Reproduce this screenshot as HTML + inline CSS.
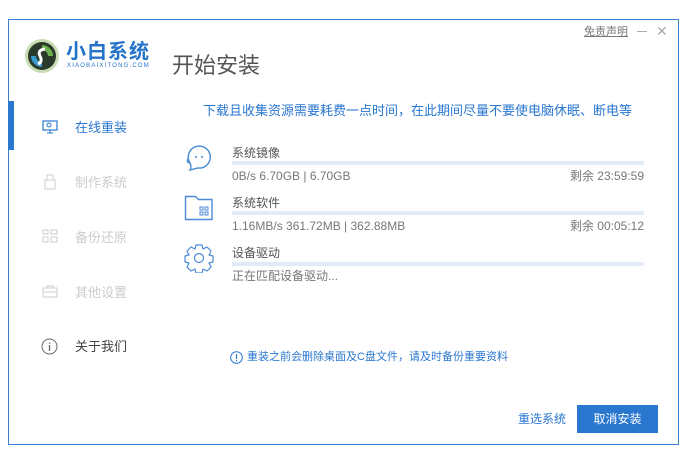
<!DOCTYPE html>
<html><head><meta charset="utf-8"><style>
*{margin:0;padding:0;box-sizing:border-box}
body{width:689px;height:455px;background:#fff;position:relative;overflow:hidden;font-family:"Liberation Sans","Noto Sans CJK SC",sans-serif;}
.win{position:absolute;left:8px;top:19px;width:671px;height:426px;border:1px solid #3a80cf;background:#fff}
.a{position:absolute;white-space:nowrap;line-height:19px}
.bar{position:absolute;left:232px;width:412px;height:4px;background:#e2ebf7}
.t{font-size:12px;color:#555}
.n{font-size:12px;color:#777}
.nav{font-size:13px;color:#ccc}
</style></head><body>
<div class="win"></div>
<div class="a" style="left:8px;top:101px;width:6px;height:49px;background:#2a77d0"></div>
<svg class="a" style="left:23px;top:37px" width="38" height="38" viewBox="0 0 38 38">
<circle cx="19" cy="19" r="17" fill="#c9dcb4"/>
<circle cx="19" cy="19" r="14" fill="#2a3a2a"/>
<path d="M19 8 A11 11 0 0 1 30 19 L25 19 A6 6 0 0 0 19 13Z" fill="#6ab04c"/>
<path d="M19 30 A11 11 0 0 1 8 19 L13 19 A6 6 0 0 0 19 25Z" fill="#3a9ad0"/>
<path d="M22 12 Q14 13 17 19 Q20 25 15 27" stroke="#fff" stroke-width="3" fill="none"/>
</svg>
<div class="a" style="left:66px;top:40px;font-size:20px;line-height:24px;color:#2473c9;font-weight:bold;letter-spacing:1px">小白系统</div>
<div class="a" style="left:67px;top:62px;font-size:6px;line-height:8px;color:#2473c9;letter-spacing:1.2px">XIAOBAIXITONG.COM</div>
<div class="a" style="left:172px;top:52px;font-size:22px;line-height:28px;color:#555">开始安装</div>
<div class="a" style="left:584px;top:23px;font-size:11px;color:#777;text-decoration:underline">免责声明</div>
<div class="a" style="left:637px;top:31px;width:10px;height:1px;background:#aaa"></div>
<div class="a" style="left:656px;top:22px;font-size:14px;color:#aaa">✕</div>
<svg class="a" style="left:42px;top:120px" width="16" height="14" viewBox="0 0 16 14"><rect x="1" y="1" width="14" height="9" fill="none" stroke="#2a77d0" stroke-width="1.2"/><circle cx="7" cy="5" r="2" fill="none" stroke="#2a77d0"/><path d="M5 13h6M8 10v3" stroke="#2a77d0"/></svg>
<div class="a" style="left:75px;top:118px;font-size:13px;color:#2a77d0">在线重装</div>
<svg class="a" style="left:44px;top:174px" width="12" height="16"><rect x="1" y="6" width="10" height="9" fill="none" stroke="#ccc"/><rect x="3" y="1" width="6" height="5" fill="none" stroke="#ccc"/></svg>
<div class="a nav" style="left:75px;top:173px">制作系统</div>
<svg class="a" style="left:42px;top:229px" width="16" height="14"><rect x="1" y="1" width="5" height="4" fill="none" stroke="#ccc"/><rect x="1" y="8" width="5" height="5" fill="none" stroke="#ccc"/><rect x="9" y="1" width="6" height="4" fill="none" stroke="#ccc"/><rect x="9" y="8" width="6" height="5" fill="none" stroke="#ccc"/></svg>
<div class="a nav" style="left:75px;top:228px">备份还原</div>
<svg class="a" style="left:42px;top:285px" width="16" height="13"><rect x="1" y="3" width="14" height="9" fill="none" stroke="#ccc"/><path d="M5 3V1h6v2M1 7h14" stroke="#ccc" fill="none"/></svg>
<div class="a nav" style="left:75px;top:283px">其他设置</div>
<svg class="a" style="left:41px;top:338px" width="17" height="17"><circle cx="8.5" cy="8.5" r="7.5" fill="none" stroke="#666"/><path d="M8.5 7v6M8.5 4.5v1.2" stroke="#666" stroke-width="1.3"/></svg>
<div class="a" style="left:75px;top:337px;font-size:13px;color:#444">关于我们</div>
<div class="a" style="left:203px;top:101px;font-size:13px;color:#2a77d0">下载且收集资源需要耗费一点时间，在此期间尽量不要使电脑休眠、断电等</div>
<svg class="a" style="left:184px;top:143px" width="30" height="30" viewBox="0 0 30 30"><path d="M6 20 A11 11 0 1 1 14 25 L6 27 Q8 24 6 20 Q2 19 4 16" fill="none" stroke="#4a8ad6" stroke-width="1.4"/><circle cx="12" cy="14" r="1" fill="#4a8ad6"/><circle cx="18" cy="14" r="1" fill="#4a8ad6"/></svg>
<div class="a t" style="left:232px;top:144px">系统镜像</div>
<div class="bar" style="top:161px"></div>
<div class="a n" style="left:232px;top:167px">0B/s 6.70GB | 6.70GB</div>
<div class="a n" style="right:45px;top:167px">剩余 23:59:59</div>
<svg class="a" style="left:184px;top:194px" width="30" height="28" viewBox="0 0 30 28"><path d="M1.5 2.5h10l3 3h13.5v20h-26.5z" fill="none" stroke="#4a8ad6" stroke-width="1.4" stroke-linejoin="round"/><rect x="16" y="13" width="3" height="3" fill="none" stroke="#4a8ad6"/><rect x="21" y="13" width="3" height="3" fill="none" stroke="#4a8ad6"/><rect x="16" y="18" width="3" height="3" fill="none" stroke="#4a8ad6"/><rect x="21" y="18" width="3" height="3" fill="none" stroke="#4a8ad6"/></svg>
<div class="a t" style="left:232px;top:194px">系统软件</div>
<div class="bar" style="top:211px"></div>
<div class="a n" style="left:232px;top:217px">1.16MB/s 361.72MB | 362.88MB</div>
<div class="a n" style="right:45px;top:217px">剩余 00:05:12</div>
<svg class="a" style="left:184px;top:243px" width="30" height="30" viewBox="0 0 30 30"><path d="M12 2h6l1 4 4-2 4 4-2 4 4 1v6l-4 1 2 4-4 4-4-2-1 4h-6l-1-4-4 2-4-4 2-4-4-1v-6l4-1-2-4 4-4 4 2z" fill="none" stroke="#4a8ad6" stroke-width="1.2" stroke-linejoin="round"/><circle cx="15" cy="15" r="4.5" fill="none" stroke="#4a8ad6" stroke-width="1.2"/></svg>
<div class="a t" style="left:232px;top:244px">设备驱动</div>
<div class="bar" style="top:262px"></div>
<div class="a n" style="left:232px;top:267px">正在匹配设备驱动...</div>
<svg class="a" style="left:230px;top:351px" width="13" height="13"><circle cx="6.5" cy="6.5" r="5.8" fill="none" stroke="#2a77d0"/><path d="M6.5 3v5M6.5 9v1.3" stroke="#2a77d0" stroke-width="1.2"/></svg>
<div class="a" style="left:247px;top:348px;font-size:11px;color:#2a77d0">重装之前会删除桌面及C盘文件，请及时备份重要资料</div>
<div class="a" style="left:518px;top:410px;font-size:12px;color:#2a77d0">重选系统</div>
<div class="a" style="left:577px;top:405px;width:81px;height:28px;background:#2a77d0;color:#fff;font-size:12px;text-align:center;line-height:28px">取消安装</div>
</body></html>
